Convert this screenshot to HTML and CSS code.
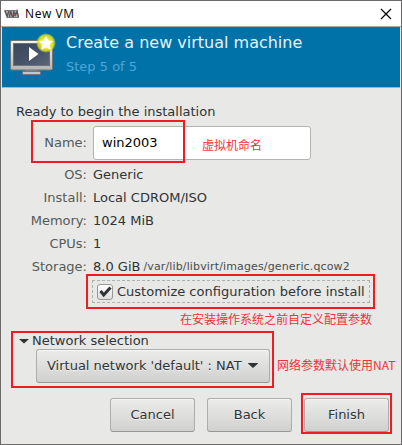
FILE: index.html
```html
<!DOCTYPE html>
<html lang="en">
<head>
<meta charset="utf-8">
<title>New VM</title>
<link rel="stylesheet" href="styles.css">
</head>
<body>
<main class="window">
  <div class="titlebar">
    <svg class="app-icon" width="16" height="10" viewBox="0 0 16 10">
      <path d="M0 1h13.500l1.500 8H2.500z" fill="#b5b3b3"/>
      <path d="M.8 1.500l2.400 6 1.800-6M5.500 8l1-6 2 6M9.500 8v-6l2 4 1.500-4 1.500 6" fill="none" stroke="#5c5658" stroke-width="1.400"/>
      <path d="M1 1.500h12.500M3 8.500h12" stroke="#777" stroke-width="1"/>
      <path d="M5 3.500h1M10 6.500h1" stroke="#b55" stroke-width="1"/>
    </svg>
    <span class="window-title">New VM</span>
    <svg class="close" width="12" height="12" viewBox="0 0 12 12"><path d="M1 1l10 10M11 1L1 11" stroke="#000" stroke-width="1.200" fill="none"/></svg>
  </div>
  <header class="banner">
    <svg class="vm-icon" width="48" height="44" viewBox="0 0 48 44">
      <defs>
        <linearGradient id="frame" x1="0" y1="0" x2="0" y2="1"><stop offset="0" stop-color="#f4f4f2"/><stop offset="1" stop-color="#b4b5b2"/></linearGradient>
        <linearGradient id="screen" x1="0" y1="0" x2="1" y2="1"><stop offset="0" stop-color="#3a4658"/><stop offset=".55" stop-color="#465368"/><stop offset="1" stop-color="#5a6679"/></linearGradient>
        <radialGradient id="glow"><stop offset="0" stop-color="#fff68c"/><stop offset=".55" stop-color="#ebe52c"/><stop offset=".8" stop-color="#dcdf20" stop-opacity=".85"/><stop offset="1" stop-color="#c8dc30" stop-opacity="0"/></radialGradient>
      </defs>
      <path d="M16 36h13v3H16z" fill="#898a88"/>
      <rect x="13.500" y="38.500" width="18" height="3" rx="1" fill="#c5c6c3" stroke="#777" stroke-width="1"/>
      <rect x="1.500" y="7.500" width="42" height="29.500" rx="1.500" fill="url(#frame)" stroke="#747773"/>
      <rect x="4.500" y="10.500" width="36" height="22" fill="url(#screen)" stroke="#6c7077"/>
      <path d="M20 14v14l9.500-7z" fill="#fff"/>
      <circle cx="37" cy="10" r="10" fill="url(#glow)"/>
      <path d="M37 3.500l2 4.300 4.800.5-3.500 3.300 1 4.700L37 14l-4.300 2.300 1-4.700-3.500-3.300 4.800-.5z" fill="#fff" stroke="#fff" stroke-width=".6" stroke-linejoin="round"/>
    </svg>
    <div class="heading">
      <h1>Create a new virtual machine</h1>
      <p>Step 5 of 5</p>
    </div>
  </header>
  <section class="content">
    <p class="ready">Ready to begin the installation</p>
    <div class="row name-row"><label class="key" for="name">Name:</label><input id="name" class="entry" value="win2003"></div>
    <div class="row"><span class="key">OS:</span><span class="value">Generic</span></div>
    <div class="row"><span class="key">Install:</span><span class="value">Local CDROM/ISO</span></div>
    <div class="row"><span class="key">Memory:</span><span class="value">1024 MiB</span></div>
    <div class="row"><span class="key">CPUs:</span><span class="value">1</span></div>
    <div class="row"><span class="key">Storage:</span><span class="value">8.0 GiB</span><span class="path">/var/lib/libvirt/images/generic.qcow2</span></div>
    <div class="customize">
      <span class="check"><svg width="14" height="14" viewBox="0 0 14 14"><path d="M2.500 6l3.200 4L12.500 2.500" fill="none" stroke="#2e3436" stroke-width="3"/></svg></span>
      <span>Customize configuration before install</span>
    </div>
    <div class="expander"><i class="arrow"></i><span>Network selection</span></div>
    <button class="button combo"><span>Virtual network 'default' : NAT</span><i class="arrow"></i></button>
    <div class="actions">
      <button class="button">Cancel</button>
      <button class="button">Back</button>
      <button class="button">Finish</button>
    </div>
  </section>
  <div class="mark mark-name"></div>
  <div class="mark mark-customize"></div>
  <div class="mark mark-network"></div>
  <div class="mark mark-finish"></div>
  <span class="note note-name" lang="zh">虚拟机命名</span>
  <span class="note note-customize" lang="zh">在安装操作系统之前自定义配置参数</span>
  <span class="note note-network" lang="zh">网络参数默认使用NAT</span>
</main>
</body>
</html>
```
FILE: styles.css
```css
* { box-sizing: border-box; }
body {
  margin: 0;
  font: 13px/16px "DejaVu Sans", sans-serif;
  color: #2e3436;
}
h1, p { margin: 0; font-weight: normal; }
.window {
  position: relative;
  width: 402px;
  height: 445px;
  overflow: hidden;
  border: 1px solid #6b6969;
  background: #e8e8e6;
}
.titlebar {
  display: flex;
  align-items: center;
  height: 26px;
  padding: 0 9px 0 3px;
  background: #fff;
  border-bottom: 1px solid #aaa;
}
.window-title {
  margin-left: 5px;
  font: 12px/16px "Open Sans", sans-serif;
  letter-spacing: .6px;
  color: #000;
}
.close { margin-left: auto; }
.banner {
  display: flex;
  height: 61px;
  margin: 0 1px;
  padding: 6px 0 0 7px;
  background: #0072a8;
  border-bottom: 1px solid #9eb6c1;
}
.heading { padding: 0 0 0 9px; }
.heading h1 {
  font-size: 16px;
  line-height: 20px;
  color: #e6f1f6;
}
.heading p {
  margin-top: 6px;
  font-size: 13px;
  line-height: 16px;
  color: #4fa5da;
}
.content { padding: 16px 12px 0 15px; }
.ready { margin-bottom: 6px; }
.row {
  display: flex;
  align-items: center;
  height: 23px;
}
.name-row { height: 34px; margin-bottom: 3px; }
.key {
  width: 71px;
  text-align: right;
  color: #555a58;
}
.value { margin-left: 6px; }
.path {
  margin-left: 3px;
  font-size: 11px;
  letter-spacing: .14px;
  color: #484d4b;
}
.entry {
  width: 218px;
  height: 34px;
  margin-left: 6px;
  padding: 0 8px 1px;
  border: 1px solid #b3b3b1;
  border-radius: 3px;
  background: #fff;
  font: inherit;
  color: #000;
}
.customize {
  display: flex;
  align-items: center;
  width: 278px;
  height: 23px;
  margin: 2px 0 0 76px;
  padding-left: 4px;
  border: 1px dashed #b0b0ae;
  white-space: nowrap;
}
.check {
  display: flex;
  width: 16px;
  height: 16px;
  margin-right: 4px;
  padding: 0;
  border: 1px solid #989996;
  border-radius: 3px;
  background: linear-gradient(#fff, #ddd);
}
.arrow {
  width: 10px;
  height: 5px;
  background: #2e3436;
  clip-path: polygon(0 0, 100% 0, 100% 10%, 50% 100%, 0 10%);
}
.expander {
  display: flex;
  align-items: center;
  gap: 3px;
  height: 16px;
  margin: 30px 0 0 3px;
}
.button {
  width: 85px;
  height: 34px;
  padding: 0;
  border: 1px solid #adadab;
  border-bottom-color: #979795;
  border-radius: 3px;
  background: linear-gradient(#ececea, #d0d0ce);
  box-shadow: inset 0 1px #f5f5f4;
  font: inherit;
  color: inherit;
  text-shadow: 0 1px #f2f2f1;
  white-space: nowrap;
}
.combo {
  display: flex;
  align-items: center;
  justify-content: space-between;
  width: 234px;
  margin: 0 0 0 20px;
  padding: 0 11px 1px 10px;
}
.actions {
  display: flex;
  justify-content: flex-end;
  gap: 12px;
  margin-top: 15px;
}
.mark {
  position: absolute;
  border: 2px solid #f41a23;
}
.mark-name { left: 30px; top: 119px; width: 154px; height: 43px; }
.mark-customize { left: 85px; top: 273px; width: 289px; height: 35px; }
.mark-network { left: 10px; top: 330px; width: 263px; height: 57px; }
.mark-finish { left: 300px; top: 392px; width: 91px; height: 41px; }
.note {
  position: absolute;
  font: 12px/16px "Noto Sans CJK SC", sans-serif;
  color: #f0323a;
  white-space: nowrap;
}
.note-name { left: 201px; top: 136px; }
.note-customize { left: 179px; top: 310px; }
.note-network { left: 276px; top: 356px; }
```
